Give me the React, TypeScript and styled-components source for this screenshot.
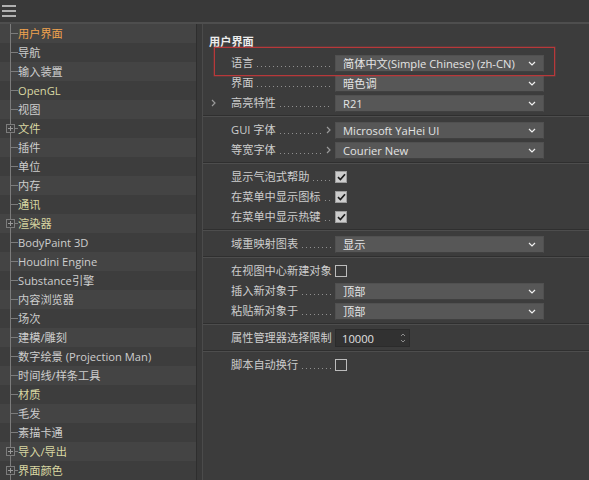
import React from 'react';
import styled, { createGlobalStyle } from 'styled-components';

const Global = createGlobalStyle`
  html, body { margin: 0; padding: 0; background: #3b3b3b; }
  body {
    font-family: "Open Sans", "Noto Sans CJK SC", sans-serif;
    font-size: 11.2px;
    color: #cbcbcb;
  }
  * { box-sizing: border-box; }
`;

const Shell = styled.div`
  width: 589px;
  height: 480px;
  display: flex;
  flex-direction: column;
  overflow: hidden;
  background: #3c3c3c;
`;

const TopBar = styled.div`
  flex: none;
  height: 24px;
  background: #393939;
  border-bottom: 2px solid #4e4e4e;
  display: flex;
  align-items: center;
  padding-left: 2px;
`;

const Body = styled.div`
  flex: 1;
  display: flex;
  min-height: 0;
`;

const LeftPanel = styled.div`
  width: 197px;
  flex: none;
  display: flex;
  flex-direction: column;
  border-right: 1px solid #2e2e2e;
`;

type Kind = 'normal' | 'active' | 'plugin';

const TreeRow = styled.div<{ $odd: boolean }>`
  height: 19px;
  flex: none;
  display: flex;
  align-items: center;
  background: ${(p) => (p.$odd ? '#3d3d3d' : '#444444')};
`;

const Gutter = styled.div`
  width: 18px;
  height: 100%;
  flex: none;
  display: flex;
  align-items: center;
  background:
    linear-gradient(#7c7c7c, #7c7c7c) no-repeat 10px 0 / 1px 100%,
    linear-gradient(#7c7c7c, #7c7c7c) no-repeat 10px 50% / 8px 1px;
`;

const Expander = styled.span`
  width: 9px;
  height: 9px;
  margin-left: 6px;
  border: 1px solid #7c7c7c;
  background:
    linear-gradient(#9a9a9a, #9a9a9a) no-repeat center / 5px 1px,
    linear-gradient(#9a9a9a, #9a9a9a) no-repeat center / 1px 5px,
    #404040;
`;

const TreeText = styled.span<{ $kind: Kind }>`
  white-space: nowrap;
  line-height: 19px;
  color: ${(p) =>
    p.$kind === 'active' ? '#f0a24e' : p.$kind === 'plugin' ? '#d9d7a2' : '#cdcdcd'};
`;

const Splitter = styled.div`
  width: 6px;
  flex: none;
  background: #393939;
  border-right: 1px solid #4b4b4b;
`;

const RightPanel = styled.div`
  flex: 1;
  display: flex;
  flex-direction: column;
  padding-top: 10px;
  background: #3c3c3c;
`;

const Heading = styled.div`
  padding-left: 6px;
  height: 16px;
  line-height: 16px;
  font-weight: bold;
  color: #ececec;
  margin-bottom: 3px;
`;

const Group = styled.div<{ $last?: boolean }>`
  padding: 3px 0 2px;
  border-bottom: ${(p) => (p.$last ? 'none' : '1px solid #2f2f2f')};
  box-shadow: ${(p) => (p.$last ? 'none' : '0 1px 0 #4d4d4d')};
  margin-bottom: 1px;
`;

const FirstGroup = styled(Group)`
  padding-top: 0;
`;

const Row = styled.div`
  height: 20px;
  display: grid;
  grid-template-columns: 21px 104px auto;
  align-items: center;
  padding-left: 7px;
`;

const HighlightRow = styled(Row)`
  position: relative;
  &::after {
    content: '';
    position: absolute;
    left: 11px;
    right: 34px;
    top: -6px;
    bottom: -3px;
    border: 1px solid #b8383a;
    box-shadow: 0 0 0 0.5px rgba(184, 56, 58, 0.5);
    pointer-events: none;
  }
`;

const Lead = styled.div`
  display: flex;
  align-items: center;
  padding-left: 1px;
  color: #9a9a9a;
`;

const Label = styled.div`
  display: flex;
  align-items: center;
  min-width: 0;
  padding-right: 4px;
  white-space: nowrap;
  color: #cdcdcd;
  line-height: 20px;
`;

const Leader = styled.span`
  flex: 1;
  min-width: 0;
  height: 1px;
  margin: 7px 0 0 4px;
  align-self: center;
  background: linear-gradient(to right, #909090 1px, transparent 1px) repeat-x 0 0 / 4px 1px;
`;

const Arrow = styled.span`
  width: 10px;
  flex: none;
  display: flex;
  justify-content: flex-end;
  color: #9a9a9a;
`;

const Dropdown = styled.div`
  width: 209px;
  height: 17px;
  display: flex;
  align-items: center;
  justify-content: space-between;
  padding: 0 7px 0 7px;
  background: #575757;
  border: 1px solid #505050;
  border-bottom-color: #404040;
  color: #e4e4e4;
  white-space: nowrap;
`;

const NumberField = styled.div`
  width: 75px;
  height: 18px;
  display: flex;
  align-items: center;
  justify-content: space-between;
  padding: 0 3px 0 6px;
  background: #313131;
  border: 1px solid #2b2b2b;
  color: #e0e0e0;
`;

const Check = styled.div<{ $on: boolean }>`
  width: 12px;
  height: 12px;
  display: flex;
  align-items: center;
  justify-content: center;
  border: 1px solid ${(p) => (p.$on ? '#9c9c9c' : '#bcbcbc')};
  background: ${(p) => (p.$on ? '#cdcdcd' : '#3a3a3a')};
`;

const Chevron = () => (
  <svg width="8" height="5" viewBox="0 0 8 5">
    <path d="M1 1 L4 4 L7 1" fill="none" stroke="#f0f0f0" strokeWidth="1.2" />
  </svg>
);

const RightArrow = () => (
  <svg width="5" height="8" viewBox="0 0 5 8">
    <path d="M1 1 L4 4 L1 7" fill="none" stroke="#9a9a9a" strokeWidth="1.2" />
  </svg>
);

const Spinner = () => (
  <svg width="6" height="12" viewBox="0 0 6 12">
    <path d="M1 4 L3 2 L5 4" fill="none" stroke="#8c8c8c" strokeWidth="1" />
    <path d="M1 8 L3 10 L5 8" fill="none" stroke="#8c8c8c" strokeWidth="1" />
  </svg>
);

const CheckMark = () => (
  <svg width="9" height="8" viewBox="0 0 9 8">
    <path d="M1 4.2 L3.4 6.5 L8 1.2" fill="none" stroke="#1e1e1e" strokeWidth="1.7" />
  </svg>
);

const Hamburger = () => (
  <svg width="15" height="14" viewBox="0 0 15 14">
    <rect x="0" y="1" width="14" height="2" fill="#b0b0b0" />
    <rect x="0" y="6" width="14" height="2" fill="#b0b0b0" />
    <rect x="0" y="11" width="14" height="2" fill="#b0b0b0" />
  </svg>
);

const treeItems: { t: string; k?: Kind; exp?: boolean }[] = [
  { t: '用户界面', k: 'active' },
  { t: '导航' },
  { t: '输入装置' },
  { t: 'OpenGL', k: 'plugin' },
  { t: '视图' },
  { t: '文件', k: 'plugin', exp: true },
  { t: '插件' },
  { t: '单位' },
  { t: '内存' },
  { t: '通讯', k: 'plugin' },
  { t: '渲染器', k: 'plugin', exp: true },
  { t: 'BodyPaint 3D' },
  { t: 'Houdini Engine' },
  { t: 'Substance引擎' },
  { t: '内容浏览器' },
  { t: '场次' },
  { t: '建模/雕刻' },
  { t: '数字绘景 (Projection Man)' },
  { t: '时间线/样条工具' },
  { t: '材质', k: 'plugin' },
  { t: '毛发' },
  { t: '素描卡通' },
  { t: '导入/导出', k: 'plugin', exp: true },
  { t: '界面颜色', k: 'plugin', exp: true },
];

type Control =
  | { type: 'drop'; value: string }
  | { type: 'check'; on: boolean }
  | { type: 'num'; value: string };

type Setting = {
  label: string;
  dots?: boolean;
  lead?: boolean;
  arrow?: boolean;
  control: Control;
};

const renderControl = (c: Control) => {
  if (c.type === 'drop')
    return (
      <Dropdown>
        <span>{c.value}</span>
        <Chevron />
      </Dropdown>
    );
  if (c.type === 'check')
    return <Check $on={c.on}>{c.on ? <CheckMark /> : null}</Check>;
  return (
    <NumberField>
      <span>{c.value}</span>
      <Spinner />
    </NumberField>
  );
};

const SettingRow = ({ s, highlight }: { s: Setting; highlight?: boolean }) => {
  const R = highlight ? HighlightRow : Row;
  return (
    <R>
      <Lead>{s.lead ? <RightArrow /> : null}</Lead>
      <Label>
        <span>{s.label}</span>
        {s.dots !== false ? <Leader /> : null}
        {s.arrow ? (
          <Arrow>
            <RightArrow />
          </Arrow>
        ) : null}
      </Label>
      {renderControl(s.control)}
    </R>
  );
};

const groups: Setting[][] = [
  [
    { label: 'GUI 字体', arrow: true, control: { type: 'drop', value: 'Microsoft YaHei UI' } },
    { label: '等宽字体', arrow: true, control: { type: 'drop', value: 'Courier New' } },
  ],
  [
    { label: '显示气泡式帮助', control: { type: 'check', on: true } },
    { label: '在菜单中显示图标', control: { type: 'check', on: true } },
    { label: '在菜单中显示热键', control: { type: 'check', on: true } },
  ],
  [{ label: '域重映射图表', control: { type: 'drop', value: '显示' } }],
  [
    { label: '在视图中心新建对象', dots: false, control: { type: 'check', on: false } },
    { label: '插入新对象于', control: { type: 'drop', value: '顶部' } },
    { label: '粘贴新对象于', control: { type: 'drop', value: '顶部' } },
  ],
  [{ label: '属性管理器选择限制', dots: false, control: { type: 'num', value: '10000' } }],
];

export default function App() {
  return (
    <Shell>
      <Global />
      <TopBar>
        <Hamburger />
      </TopBar>
      <Body>
        <LeftPanel>
          {treeItems.map((it, i) => (
            <TreeRow key={it.t} $odd={i % 2 === 1}>
              <Gutter>{it.exp ? <Expander /> : null}</Gutter>
              <TreeText $kind={it.k ?? 'normal'}>{it.t}</TreeText>
            </TreeRow>
          ))}
        </LeftPanel>
        <Splitter />
        <RightPanel>
          <Heading>用户界面</Heading>
          <FirstGroup>
            <SettingRow
              highlight
              s={{ label: '语言', control: { type: 'drop', value: '简体中文(Simple Chinese) (zh-CN)' } }}
            />
            <SettingRow s={{ label: '界面', control: { type: 'drop', value: '暗色调' } }} />
            <SettingRow s={{ label: '高亮特性', lead: true, control: { type: 'drop', value: 'R21' } }} />
          </FirstGroup>
          {groups.map((g, gi) => (
            <Group key={gi}>
              {g.map((s) => (
                <SettingRow key={s.label} s={s} />
              ))}
            </Group>
          ))}
          <Group $last>
            <SettingRow s={{ label: '脚本自动换行', control: { type: 'check', on: false } }} />
          </Group>
        </RightPanel>
      </Body>
    </Shell>
  );
}
